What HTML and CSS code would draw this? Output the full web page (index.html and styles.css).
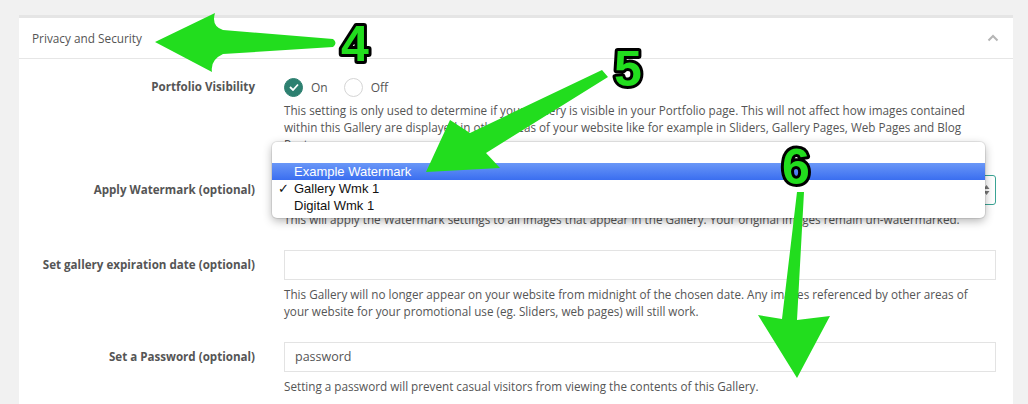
FILE: index.html
```html
<!DOCTYPE html>
<html lang="en">
  <head>
    <meta charset="UTF-8" />
    <title>Gallery Settings</title>
    <link rel="stylesheet" href="styles.css">
  </head>
  <body>
    <div class="panel">
      <div class="panel-head">
        <span>Privacy and Security</span>
        <svg class="chevron" width="12" height="8" viewBox="0 0 12 8">
          <path d="M1.5 6.5 L6 2 L10.5 6.5" fill="none" stroke="#b5b5b5" stroke-width="2" />
        </svg>
      </div>

      <div class="panel-body">
        <div class="row">
          <label class="label label-short">Portfolio Visibility</label>
          <div class="field">
            <div class="radios">
              <span class="radio checked">
                <svg width="10" height="8" viewBox="0 0 10 8">
                  <path d="M1 4 L4 7 L9 1.5" fill="none" stroke="#fff" stroke-width="1.8" />
                </svg>
              </span>
              <span class="radio-text">On</span>
              <span class="radio"></span>
              <span class="radio-text">Off</span>
            </div>
            <p class="help">This setting is only used to determine if your Gallery is visible in your Portfolio page. This will not affect how images contained within this Gallery are displayed in other areas of your website like for example in Sliders, Gallery Pages, Web Pages and Blog Posts.</p>
          </div>
        </div>

        <div class="row">
          <label class="label">Apply Watermark (optional)</label>
          <div class="field">
            <div class="select">
              <span class="select-arrows">
                <svg width="7" height="12" viewBox="0 0 7 12">
                  <path d="M3.5 1 L6.5 5 L0.5 5 Z M3.5 11 L6.5 7 L0.5 7 Z" fill="#777" />
                </svg>
              </span>
            </div>
            <p class="help">This will apply the Watermark settings to all images that appear in the Gallery. Your original images remain un-watermarked.</p>
            <ul class="dropdown">
              <li class="option"></li>
              <li class="option active">Example Watermark</li>
              <li class="option"><span class="tick">&#10003;</span>Gallery Wmk 1</li>
              <li class="option">Digital Wmk 1</li>
            </ul>
          </div>
        </div>

        <div class="row">
          <label class="label">Set gallery expiration date (optional)</label>
          <div class="field">
            <div class="input"></div>
            <p class="help">This Gallery will no longer appear on your website from midnight of the chosen date. Any images referenced by other areas of your website for your promotional use (eg. Sliders, web pages) will still work.</p>
          </div>
        </div>

        <div class="row">
          <label class="label">Set a Password (optional)</label>
          <div class="field">
            <div class="input">password</div>
            <p class="help">Setting a password will prevent casual visitors from viewing the contents of this Gallery.</p>
          </div>
        </div>
      </div>
    </div>

    <!-- annotation arrows drawn over the screenshot -->
    <svg class="notes" width="1028" height="404" viewBox="0 0 1028 404">
      <g fill="#22dd1e">
        <path d="M155 42 L215 13 Q211 26 223 30 L333 39 Q338 43 333 47 L223 54 Q210 60 212 72 Z" />
        <path d="M426 172 L500 168 L486 153 L608 77 L602 70 L470 133 L450 120 Z" />
        <path d="M797 378 L830 316 L797 320 L804 192 L797 192 L782 319 L758 315 Z" />
      </g>
      <g class="digits">
        <text x="341" y="61">4</text>
        <text x="614" y="86">5</text>
        <text x="782" y="184">6</text>
      </g>
    </svg>
  </body>
</html>
```

FILE: styles.css
```css
* {
  box-sizing: border-box;
  margin: 0;
  padding: 0;
}

body {
  font-family: "Open Sans", sans-serif;
  color: #555;
  background-color: #f1f1f1;
  width: 1028px;
  height: 404px;
  overflow: hidden;
}

.panel {
  margin: 15px 0 0 19px;
  width: 994px;
  height: 389px;
  background-color: #fff;
  border-top: 3px solid #e5e5e5;
}

.panel-head {
  height: 41px;
  padding: 0 14px 0 13px;
  border-bottom: 1px solid #e6e6e6;
  display: flex;
  align-items: center;
  justify-content: space-between;
  font-size: 11.8px;
}

.panel-body {
  padding: 19px 17px 0 0;
}

.row {
  display: grid;
  grid-template-columns: 236px 1fr;
  column-gap: 29px;
  margin-bottom: 22px;
}

.label {
  text-align: right;
  font-size: 11.6px;
  font-weight: bold;
  line-height: 30px;
}

.label-short {
  line-height: 18px;
}

.field {
  position: relative;
}

.radios {
  display: flex;
  align-items: center;
  height: 18px;
  font-size: 12px;
}

.radio {
  width: 19px;
  height: 19px;
  border-radius: 50%;
  border: 1px solid #d5d5d5;
  display: flex;
  align-items: center;
  justify-content: center;
}

.radio.checked {
  background-color: #2d8070;
  border-color: #2d8070;
}

.radio-text {
  margin: 0 16px 0 8px;
}

.help {
  margin-top: 6px;
  padding-right: 24px;
  font-size: 11.7px;
  line-height: 17px;
}

.select {
  height: 30px;
  border: 1px solid #3aa394;
  border-radius: 3px;
  display: flex;
  align-items: center;
  justify-content: flex-end;
  padding-right: 5px;
}

.input {
  height: 30px;
  border: 1px solid #e3e3e3;
  padding-left: 10px;
  font-size: 12.5px;
  line-height: 28px;
}

.dropdown {
  position: absolute;
  left: -12px;
  top: -33px;
  width: 713px;
  padding: 4px 0;
  list-style: none;
  background-color: #fff;
  border-radius: 5px;
  box-shadow: 0 3px 10px rgba(0, 0, 0, 0.3), 0 0 0 1px rgba(0, 0, 0, 0.08);
  font-family: "Liberation Sans", sans-serif;
  font-size: 13px;
  color: #111;
}

.option {
  position: relative;
  height: 17px;
  line-height: 17px;
  padding-left: 22px;
}

.option.active {
  color: #fff;
  background: linear-gradient(#6a97f7, #3a6ef0);
}

.tick {
  position: absolute;
  left: 6px;
}

.notes {
  position: absolute;
  left: 0;
  top: 0;
  pointer-events: none;
}

.digits text {
  font-family: "Liberation Sans", sans-serif;
  font-weight: bold;
  font-size: 50px;
  fill: #22dd1e;
  stroke: #000;
  stroke-width: 6px;
  stroke-linejoin: round;
  paint-order: stroke;
}
```
